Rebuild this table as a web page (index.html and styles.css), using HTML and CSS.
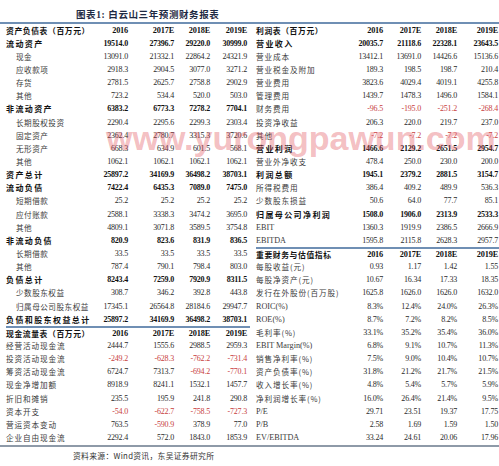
FILE: index.html
```html
<!DOCTYPE html>
<html lang="zh-CN">
<head>
<meta charset="utf-8">
<title>白云山三年预测财务报表</title>
<link rel="stylesheet" href="styles.css">
</head>
<body>
<div class="page">
  <div class="title">图表1: 白云山三年预测财务报表</div>
  <div class="tables">
    <div class="tbl left">
      <div class="row head"><span class="lab">资产负债表（百万元）</span><span>2016</span><span>2017E</span><span>2018E</span><span>2019E</span></div>
      <div class="row b"><span class="lab">流动资产</span><span>19514.0</span><span>27396.7</span><span>29220.0</span><span>30999.0</span></div>
      <div class="row"><span class="lab ind">现金</span><span>13091.0</span><span>21332.1</span><span>22864.2</span><span>24321.9</span></div>
      <div class="row"><span class="lab ind">应收款项</span><span>2918.3</span><span>2904.5</span><span>3077.0</span><span>3271.2</span></div>
      <div class="row"><span class="lab ind">存货</span><span>2781.5</span><span>2625.7</span><span>2758.8</span><span>2902.9</span></div>
      <div class="row"><span class="lab ind">其他</span><span>723.2</span><span>534.4</span><span>520.0</span><span>503.0</span></div>
      <div class="row b"><span class="lab">非流动资产</span><span>6383.2</span><span>6773.3</span><span>7278.2</span><span>7704.1</span></div>
      <div class="row"><span class="lab ind">长期股权投资</span><span>2290.4</span><span>2295.6</span><span>2299.3</span><span>2303.4</span></div>
      <div class="row"><span class="lab ind">固定资产</span><span>2362.4</span><span>2780.7</span><span>3315.3</span><span>3720.6</span></div>
      <div class="row"><span class="lab ind">无形资产</span><span>668.3</span><span>634.9</span><span>601.5</span><span>568.1</span></div>
      <div class="row"><span class="lab ind">其他</span><span>1062.1</span><span>1062.1</span><span>1062.1</span><span>1062.1</span></div>
      <div class="row b"><span class="lab">资产总计</span><span>25897.2</span><span>34169.9</span><span>36498.2</span><span>38703.1</span></div>
      <div class="row b"><span class="lab">流动负债</span><span>7422.4</span><span>6435.3</span><span>7089.0</span><span>7475.0</span></div>
      <div class="row"><span class="lab ind">短期借款</span><span>25.2</span><span>25.2</span><span>25.2</span><span>25.2</span></div>
      <div class="row"><span class="lab ind">应付账款</span><span>2588.1</span><span>3338.3</span><span>3474.2</span><span>3695.0</span></div>
      <div class="row"><span class="lab ind">其他</span><span>4809.1</span><span>3071.8</span><span>3589.5</span><span>3754.8</span></div>
      <div class="row b"><span class="lab">非流动负债</span><span>820.9</span><span>823.6</span><span>831.9</span><span>836.5</span></div>
      <div class="row"><span class="lab ind">长期借款</span><span>33.5</span><span>33.5</span><span>33.5</span><span>33.5</span></div>
      <div class="row"><span class="lab ind">其他</span><span>787.4</span><span>790.1</span><span>798.4</span><span>803.0</span></div>
      <div class="row b"><span class="lab">负债总计</span><span>8243.4</span><span>7259.0</span><span>7920.9</span><span>8311.5</span></div>
      <div class="row"><span class="lab ind">少数股东权益</span><span>308.7</span><span>346.2</span><span>392.8</span><span>443.8</span></div>
      <div class="row"><span class="lab ind">归属母公司股东权益</span><span>17345.1</span><span>26564.8</span><span>28184.6</span><span>29947.7</span></div>
      <div class="row b"><span class="lab">负债和股东权益总计</span><span>25897.2</span><span>34169.9</span><span>36498.2</span><span>38703.1</span></div>
      <div class="row head sep"><span class="lab">现金流量表（百万元）</span><span>2016</span><span>2017E</span><span>2018E</span><span>2019E</span></div>
      <div class="row"><span class="lab">经营活动现金流</span><span>2444.7</span><span>1555.6</span><span>2988.5</span><span>2959.3</span></div>
      <div class="row"><span class="lab">投资活动现金流</span><span class="neg">-249.2</span><span class="neg">-628.3</span><span class="neg">-762.2</span><span class="neg">-731.4</span></div>
      <div class="row"><span class="lab">筹资活动现金流</span><span>6724.7</span><span>7313.7</span><span class="neg">-694.2</span><span class="neg">-770.1</span></div>
      <div class="row"><span class="lab">现金净增加额</span><span>8918.9</span><span>8241.1</span><span>1532.1</span><span>1457.7</span></div>
      <div class="row"><span class="lab">折旧和摊销</span><span>235.5</span><span>195.9</span><span>241.8</span><span>290.8</span></div>
      <div class="row"><span class="lab">资本开支</span><span class="neg">-54.0</span><span class="neg">-622.7</span><span class="neg">-758.5</span><span class="neg">-727.3</span></div>
      <div class="row"><span class="lab">营运资本变动</span><span>763.5</span><span class="neg">-590.9</span><span>378.9</span><span>77.0</span></div>
      <div class="row"><span class="lab">企业自由现金流</span><span>2292.4</span><span>572.0</span><span>1843.0</span><span>1853.9</span></div>
    </div>
    <div class="tbl right">
      <div class="row head"><span class="lab">利润表（百万元）</span><span>2016</span><span>2017E</span><span>2018E</span><span>2019E</span></div>
      <div class="row b"><span class="lab">营业收入</span><span>20035.7</span><span>21118.6</span><span>22328.1</span><span>23643.5</span></div>
      <div class="row"><span class="lab">营业成本</span><span>13412.1</span><span>13691.0</span><span>14426.6</span><span>15136.6</span></div>
      <div class="row"><span class="lab">营业税金及附加</span><span>189.3</span><span>198.5</span><span>198.7</span><span>210.4</span></div>
      <div class="row"><span class="lab">营业费用</span><span>3823.6</span><span>4029.4</span><span>4019.1</span><span>4255.8</span></div>
      <div class="row"><span class="lab">管理费用</span><span>1439.7</span><span>1478.3</span><span>1496.0</span><span>1584.1</span></div>
      <div class="row"><span class="lab">财务费用</span><span class="neg">-96.5</span><span class="neg">-195.0</span><span class="neg">-251.2</span><span class="neg">-268.4</span></div>
      <div class="row"><span class="lab">投资净收益</span><span>206.3</span><span>220.0</span><span>219.7</span><span>237.0</span></div>
      <div class="row"><span class="lab">其他</span><span class="neg">-7.2</span><span class="neg">-7.2</span><span class="neg">-7.2</span><span class="neg">-7.2</span></div>
      <div class="row b"><span class="lab">营业利润</span><span>1466.6</span><span>2129.2</span><span>2651.5</span><span>2954.7</span></div>
      <div class="row"><span class="lab">营业外净收支</span><span>478.4</span><span>250.0</span><span>230.0</span><span>200.0</span></div>
      <div class="row b"><span class="lab">利润总额</span><span>1945.1</span><span>2379.2</span><span>2881.5</span><span>3154.7</span></div>
      <div class="row"><span class="lab">所得税费用</span><span>386.4</span><span>409.2</span><span>489.9</span><span>536.3</span></div>
      <div class="row"><span class="lab">少数股东损益</span><span>50.6</span><span>64.0</span><span>77.7</span><span>85.1</span></div>
      <div class="row b"><span class="lab">归属母公司净利润</span><span>1508.0</span><span>1906.0</span><span>2313.9</span><span>2533.3</span></div>
      <div class="row"><span class="lab lat">EBIT</span><span>1360.3</span><span>1919.9</span><span>2386.5</span><span>2666.9</span></div>
      <div class="row"><span class="lab lat">EBITDA</span><span>1595.8</span><span>2115.8</span><span>2628.3</span><span>2957.7</span></div>
      <div class="row head sep"><span class="lab">重要财务与估值指标</span><span>2016</span><span>2017E</span><span>2018E</span><span>2019E</span></div>
      <div class="row"><span class="lab">每股收益(元)</span><span>0.93</span><span>1.17</span><span>1.42</span><span>1.55</span></div>
      <div class="row"><span class="lab">每股净资产(元)</span><span>10.67</span><span>16.34</span><span>17.33</span><span>18.35</span></div>
      <div class="row"><span class="lab">发行在外股份(百万股)</span><span>1625.8</span><span>1626.0</span><span>1626.0</span><span>1632.0</span></div>
      <div class="row"><span class="lab lat">ROIC(%)</span><span>8.3%</span><span>12.4%</span><span>24.0%</span><span>26.3%</span></div>
      <div class="row"><span class="lab lat">ROE(%)</span><span>8.7%</span><span>7.2%</span><span>8.2%</span><span>8.5%</span></div>
      <div class="row"><span class="lab">毛利率(%)</span><span>33.1%</span><span>35.2%</span><span>35.4%</span><span>36.0%</span></div>
      <div class="row"><span class="lab lat">EBIT Margin(%)</span><span>6.8%</span><span>9.1%</span><span>10.7%</span><span>11.3%</span></div>
      <div class="row"><span class="lab">销售净利率(%)</span><span>7.5%</span><span>9.0%</span><span>10.4%</span><span>10.7%</span></div>
      <div class="row"><span class="lab">资产负债率(%)</span><span>31.8%</span><span>21.2%</span><span>21.7%</span><span>21.5%</span></div>
      <div class="row"><span class="lab">收入增长率(%)</span><span>4.8%</span><span>5.4%</span><span>5.7%</span><span>5.9%</span></div>
      <div class="row"><span class="lab">净利润增长率(%)</span><span>16.0%</span><span>26.4%</span><span>21.4%</span><span>9.5%</span></div>
      <div class="row"><span class="lab lat">P/E</span><span>29.71</span><span>23.51</span><span>19.37</span><span>17.75</span></div>
      <div class="row"><span class="lab lat">P/B</span><span>2.58</span><span>1.69</span><span>1.59</span><span>1.50</span></div>
      <div class="row"><span class="lab lat">EV/EBITDA</span><span>33.24</span><span>24.61</span><span>20.06</span><span>17.96</span></div>
    </div>
  </div>
  <div class="source">资料来源：Wind资讯，东吴证券研究所</div>
  <div class="watermark">www.yurongpawun.com</div>
</div>
</body>
</html>
```

FILE: styles.css
```css
* { box-sizing: border-box; margin: 0; padding: 0; }
html, body { background: #ffffff; }
body {
  width: 499px;
  height: 466px;
  overflow: hidden;
  font-family: "Liberation Serif", "Noto Sans CJK SC", serif;
  color: #2a2a2a;
}
.page {
  position: relative;
  width: 499px;
  height: 466px;
  overflow: hidden;
}
.title {
  height: 22px;
  padding: 9px 0 0 76px;
  font-family: "Liberation Serif", "Noto Sans CJK SC", serif;
  font-size: 9.5px;
  line-height: 12px;
  font-weight: bold;
  color: #1e2a44;
  letter-spacing: 0.6px;
}
.tables {
  display: flex;
  border-top: 2px solid #6f8fb4;
  border-bottom: 2px solid #8e9aa8;
}
.tbl { display: flex; flex-direction: column; }
.left { width: 250px; padding-left: 6px; }
.right { width: 249px; padding-left: 6px; }
.row {
  display: grid;
  height: 13.15px;
  align-items: center;
  font-size: 8px;
  line-height: 10px;
  white-space: nowrap;
}
.left .row { grid-template-columns: 84px 38px 46px 36px 37px; }
.right .row { grid-template-columns: 88px 39px 38px 36px 41px; }
.row span { text-align: right; letter-spacing: -0.2px; }
.row .lab {
  text-align: left;
  font-family: "Noto Sans CJK SC", sans-serif;
  font-size: 7.6px;
  letter-spacing: 0.9px;
  color: #3a3a3a;
}
.row .lab.lat {
  font-family: "Liberation Serif", serif;
  font-size: 8.2px;
  letter-spacing: 0;
}
.row .lab.ind { padding-left: 10px; letter-spacing: 0.5px; }
.row.b span { font-weight: bold; color: #111; }
.row.b .lab { font-size: 8px; letter-spacing: 1.4px; }
.row.head span { font-weight: bold; color: #111; font-size: 8.3px; }
.row.head .lab { font-size: 7.8px; letter-spacing: 0.6px; }
.row.sep { border-top: 2px solid #6f8fb4; }
.neg { color: #c8403d; }
.source {
  padding: 3px 0 0 73px;
  font-family: "Noto Sans CJK SC", sans-serif;
  font-size: 7.8px;
  line-height: 11px;
  color: #333;
  letter-spacing: 0.3px;
}
.watermark {
  position: absolute;
  left: 106px;
  top: 116px;
  font-family: "Liberation Sans", Arial, sans-serif;
  font-weight: bold;
  font-size: 34px;
  line-height: 44px;
  color: rgba(226, 90, 100, 0.4);
  white-space: nowrap;
  pointer-events: none;
}
```
